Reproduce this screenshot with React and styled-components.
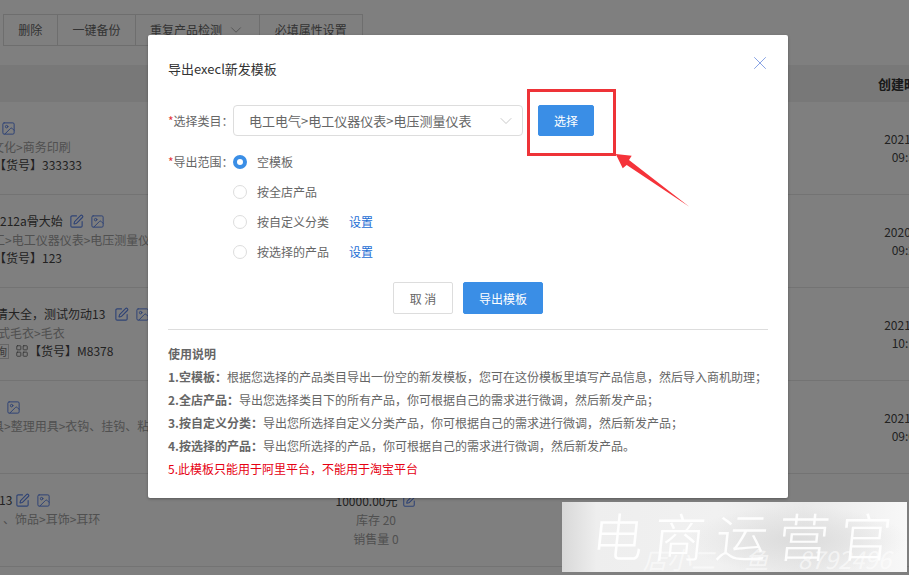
import React from "react";
import styled, { createGlobalStyle } from "styled-components";
import { ChevronDown, Image, LayoutGrid, SquarePen, X } from "lucide-react";

const GlobalStyle = createGlobalStyle`
  html, body {
    margin: 0;
    padding: 0;
    background: #fff;
  }
  * {
    box-sizing: border-box;
  }
  body {
    font: 12px/18px "Noto Sans CJK SC", "Liberation Sans", sans-serif;
    color: #333;
  }
`;

const Page = styled.div`
  position: relative;
  overflow: hidden;
  width: 909px;
  height: 575px;
  background: #fff;
`;

const Toolbar = styled.div`
  display: flex;
  width: 360px;
  height: 32px;
  margin: 14px 0 0 3px;
  border: 1px solid #ddd;
`;

const ToolButton = styled.div`
  display: flex;
  align-items: center;
  justify-content: center;
  gap: 5px;
  width: ${(p) => p.$width}px;
  color: #666;
  border-right: 1px solid #ddd;
  &:last-child {
    border-right: 0;
  }
`;

const TableHead = styled.div`
  display: flex;
  justify-content: flex-end;
  align-items: center;
  height: 37px;
  margin-top: 19px;
  background: #f0f0f0;
  font-size: 13px;
  font-weight: 700;
  color: #333;
  span {
    width: 31px;
    overflow: hidden;
    white-space: nowrap;
  }
`;

const Row = styled.div`
  display: grid;
  grid-template-columns: 320px 112px 433px 100px;
  height: 93px;
  border-bottom: 1px solid #e6e6e6;
`;

const TitleCell = styled.div`
  padding-top: 17px;
  white-space: nowrap;
`;

const Line = styled.div`
  display: flex;
  align-items: center;
  height: 18.5px;
  margin-left: ${(p) => p.$shift || 0}px;
  color: ${(p) => (p.$muted ? "#a0a0a0" : "#444")};
`;

const IconLink = styled.span`
  display: inline-flex;
  margin-left: ${(p) => p.$gap}px;
  color: ${(p) => p.$color || "#5e86ea"};
`;

const Tag = styled.span`
  display: inline-block;
  height: 15px;
  padding: 0 1px;
  border: 1px solid #ccc;
  font-size: 11px;
  line-height: 13px;
  color: #777;
`;

const PriceCell = styled.div`
  padding-top: 17px;
  text-align: center;
  line-height: 19px;
  color: #a0a0a0;
  b {
    display: flex;
    justify-content: center;
    align-items: center;
    gap: 5px;
    font-weight: 400;
    color: #444;
  }
`;

const DateCell = styled.div`
  grid-column: 4;
  padding-top: 28px;
  text-align: center;
  color: #444;
`;

const Overlay = styled.div`
  position: absolute;
  inset: 0;
  background: rgba(0, 0, 0, 0.5);
`;

const Dialog = styled.div`
  position: absolute;
  top: 35px;
  left: 148px;
  width: 640px;
  height: 463px;
  padding: 25px 20px 0;
  background: #fff;
  border-radius: 2px;
  box-shadow: 0 1px 3px rgba(0, 0, 0, 0.3);
`;

const DialogTitle = styled.h3`
  margin: 0 0 27px;
  font-size: 13px;
  line-height: 18px;
  font-weight: 400;
  color: #333;
`;

const CloseButton = styled.span`
  position: absolute;
  top: 17px;
  right: 17px;
  display: flex;
  color: #5d82dc;
`;

const FormRow = styled.div`
  display: flex;
  align-items: ${(p) => (p.$top ? "flex-start" : "center")};
  margin-top: ${(p) => p.$mt || 0}px;
`;

const Label = styled.label`
  width: 65px;
  flex: none;
  white-space: nowrap;
  color: #666;
  i {
    font-style: normal;
    color: #e4393c;
  }
`;

const Select = styled.div`
  display: flex;
  align-items: center;
  justify-content: space-between;
  width: 290px;
  height: 31px;
  padding: 0 6px 0 15px;
  border: 1px solid #ddd;
  border-radius: 4px;
  font-size: 13px;
  color: #666;
  svg {
    color: #c4c4c4;
  }
`;

const Button = styled.button`
  width: ${(p) => p.$width}px;
  height: ${(p) => p.$height}px;
  margin-left: ${(p) => p.$ml || 0}px;
  padding: 0;
  border: 1px solid ${(p) => (p.$primary ? "#3a8ee6" : "#ddd")};
  border-radius: 2px;
  background: ${(p) => (p.$primary ? "#3a8ee6" : "#fff")};
  color: ${(p) => (p.$primary ? "#fff" : "#666")};
  font: 12px "Noto Sans CJK SC", "Liberation Sans", sans-serif;
`;

const RadioList = styled.div`
  display: flex;
  flex-direction: column;
  gap: 12px;
`;

const RadioRow = styled.div`
  display: flex;
  align-items: center;
  height: 18px;
  color: #666;
  a {
    margin-left: 20px;
    color: #1c6ed4;
  }
`;

const Radio = styled.span`
  width: 14px;
  height: 14px;
  margin-right: 10px;
  border-radius: 50%;
  border: ${(p) => (p.$checked ? "4px solid #3a8ee6" : "1px solid #ddd")};
  background: #fff;
`;

const Actions = styled.div`
  display: flex;
  justify-content: center;
  margin-top: 21px;
`;

const Divider = styled.hr`
  height: 1px;
  margin: 15px 0 12px;
  border: 0;
  background: #ddd;
`;

const Notes = styled.div`
  line-height: 23px;
  color: #666;
  b {
    font-weight: 700;
    color: #666;
  }
  p {
    margin: 0;
    white-space: nowrap;
  }
  p.warn {
    color: #e60012;
  }
`;

const RedBox = styled.div`
  position: absolute;
  top: 54px;
  left: 379px;
  width: 89px;
  height: 67px;
  border: 3px solid #ee3338;
`;

const Arrow = styled.svg`
  position: absolute;
  top: 118px;
  left: 467px;
`;

const Watermark = styled.div`
  position: absolute;
  top: 502px;
  left: 562px;
  width: 345px;
  height: 70px;
  overflow: hidden;
  background:
    radial-gradient(ellipse 110px 34px at 235px 38px, #dcdcdc 0, rgba(220, 220, 220, 0) 100%),
    linear-gradient(90deg, #d8d8d8 0, #eeeeee 10%, #f1f1f1 45%, #e9e9e9 70%, #f8f8f8 100%);
`;

const WatermarkTitle = styled.div`
  position: absolute;
  top: -5px;
  left: 30px;
  font-size: 52px;
  line-height: 76px;
  font-weight: 300;
  letter-spacing: 10px;
  white-space: nowrap;
  color: rgba(255, 255, 255, 0.9);
  transform: skewX(-6deg);
`;

const WatermarkSub = styled.div`
  position: absolute;
  top: 45px;
  left: 81px;
  font-size: 24px;
  line-height: 24px;
  font-style: italic;
  word-spacing: 24px;
  white-space: nowrap;
  color: rgba(255, 255, 255, 0.55);
`;

const Edit = ({ gap }) => (
  <IconLink $gap={gap}>
    <SquarePen size={15} strokeWidth={1.8} />
  </IconLink>
);

const Pic = ({ gap }) => (
  <IconLink $gap={gap}>
    <Image size={15} strokeWidth={1.6} />
  </IconLink>
);

const radios = [
  { text: "空模板", checked: true },
  { text: "按全店产品" },
  { text: "按自定义分类", link: true },
  { text: "按选择的产品", link: true },
];

const notes = [
  ["1.空模板：", "根据您选择的产品类目导出一份空的新发模板，您可在这份模板里填写产品信息，然后导入商机助理；"],
  ["2.全店产品：", "导出您选择类目下的所有产品，你可根据自己的需求进行微调，然后新发产品；"],
  ["3.按自定义分类：", "导出您所选择自定义分类产品，你可根据自己的需求进行微调，然后新发产品；"],
  ["4.按选择的产品：", "导出您所选择的产品，你可根据自己的需求进行微调，然后新发产品。"],
];

const App = () => (
  <Page>
    <GlobalStyle />
    <Toolbar>
      <ToolButton $width={54}>删除</ToolButton>
      <ToolButton $width={79}>一键备份</ToolButton>
      <ToolButton $width={124}>
        重复产品检测 <ChevronDown size={18} strokeWidth={1.3} color="#aaa" />
      </ToolButton>
      <ToolButton $width={103}>必填属性设置</ToolButton>
    </Toolbar>
    <TableHead>
      <span>创建时间</span>
    </TableHead>

    <Row>
      <TitleCell>
        <Line>
          <Pic gap={1} />
        </Line>
        <Line $muted $shift={-8}>文化&gt;商务印刷</Line>
        <Line $shift={-6}>【货号】333333</Line>
      </TitleCell>
      <div />
      <DateCell>
        2021-03-18
        <br />
        09:30:12
      </DateCell>
    </Row>

    <Row>
      <TitleCell>
        <Line>
          212a骨大始
          <Edit gap={6} />
          <Pic gap={6} />
        </Line>
        <Line $muted $shift={-7}>工&gt;电工仪器仪表&gt;电压测量仪表</Line>
        <Line $shift={-6}>【货号】123</Line>
      </TitleCell>
      <div />
      <DateCell>
        2020-12-21
        <br />
        09:21:45
      </DateCell>
    </Row>

    <Row>
      <TitleCell>
        <Line $shift={-4}>
          清大全，测试勿动13
          <Edit gap={9} />
          <Pic gap={6} />
        </Line>
        <Line $muted $shift={-2}>式毛衣&gt;毛衣</Line>
        <Line $shift={-6}>
          <Tag>询</Tag>
          <IconLink $gap={6} $color="#666">
            <LayoutGrid size={14} strokeWidth={1.4} />
          </IconLink>
          【货号】M8378
        </Line>
      </TitleCell>
      <div />
      <DateCell>
        2021-01-08
        <br />
        10:16:33
      </DateCell>
    </Row>

    <Row>
      <TitleCell>
        <Line>
          <Pic gap={6} />
        </Line>
        <Line $muted $shift={-8}>具&gt;整理用具&gt;衣钩、挂钩、粘钩</Line>
      </TitleCell>
      <div />
      <DateCell>
        2021-02-02
        <br />
        09:08:27
      </DateCell>
    </Row>

    <Row>
      <TitleCell>
        <Line $shift={-1}>
          13
          <Edit gap={3} />
          <Pic gap={6} />
        </Line>
        <Line $muted $shift={3}>、饰品&gt;耳饰&gt;耳环</Line>
      </TitleCell>
      <PriceCell>
        <b>
          10000.00元
          <SquarePen size={14} strokeWidth={1.8} color="#5e86ea" />
        </b>
        库存 20
        <br />
        销售量 0
      </PriceCell>
    </Row>

    <Overlay />

    <Watermark>
      <WatermarkTitle>电商运营官</WatermarkTitle>
      <WatermarkSub>店小二 鱼 8792496</WatermarkSub>
    </Watermark>

    <Dialog>
      <DialogTitle>导出execl新发模板</DialogTitle>
      <CloseButton>
        <X size={22} strokeWidth={0.8} />
      </CloseButton>

      <FormRow>
        <Label>
          <i>*</i>选择类目：
        </Label>
        <Select>
          电工电气&gt;电工仪器仪表&gt;电压测量仪表
          <ChevronDown size={20} strokeWidth={1.1} />
        </Select>
        <Button $primary $width={56} $height={31} $ml={15}>
          选择
        </Button>
      </FormRow>

      <FormRow $top $mt={17}>
        <Label>
          <i>*</i>导出范围：
        </Label>
        <RadioList>
          {radios.map((item) => (
            <RadioRow key={item.text}>
              <Radio $checked={item.checked} />
              {item.text}
              {item.link && <a>设置</a>}
            </RadioRow>
          ))}
        </RadioList>
      </FormRow>

      <Actions>
        <Button $width={60} $height={32}>
          取 消
        </Button>
        <Button $primary $width={80} $height={32} $ml={10}>
          导出模板
        </Button>
      </Actions>

      <Divider />

      <Notes>
        <p>
          <b>使用说明</b>
        </p>
        {notes.map(([head, text]) => (
          <p key={head}>
            <b>{head}</b>
            {text}
          </p>
        ))}
        <p className="warn">5.此模板只能用于阿里平台，不能用于淘宝平台</p>
      </Notes>

      <RedBox />
      <Arrow width="80" height="60" viewBox="0 0 80 60">
        <path
          d="M0.7 1 L16.7 2.7 L14 7 L74.3 53.7 L11.7 12 L7.7 15.3 Z"
          fill="#f5333a"
        />
      </Arrow>
    </Dialog>
  </Page>
);

export default App;
